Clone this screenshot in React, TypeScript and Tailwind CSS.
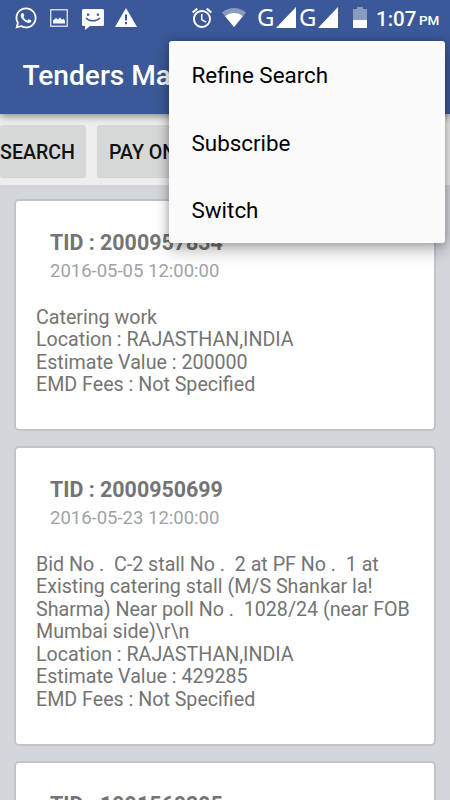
/**
 * App.tsx
 * --------------------------------------------------
 * Tender list screen with the overflow menu open.
 */
import { FaWhatsapp } from 'react-icons/fa';
import { MdAlarm } from 'react-icons/md';

const menuItems = ['Refine Search', 'Subscribe', 'Switch'];

const tenders = [
  {
    id: '2000957834',
    date: '2016-05-05 12:00:00',
    lines: ['Catering work'],
    value: '200000',
    height: 'h-[232px]',
  },
  {
    id: '2000950699',
    date: '2016-05-23 12:00:00',
    lines: [
      'Bid No .  C-2 stall No .  2 at PF No .  1 at',
      'Existing catering stall (M/S Shankar la!',
      'Sharma) Near poll No .  1028/24 (near FOB',
      'Mumbai side)\\r\\n',
    ],
    value: '429285',
    height: 'h-[300px]',
  },
  {
    id: '1991560295',
    height: 'h-[232px]',
  },
];

function SignalIcon() {
  return (
    <svg className="mb-px w-5 h-[21px]" viewBox="0 0 20 21" fill="currentColor">
      <path d="M20 0v21H0z" />
    </svg>
  );
}

function StatusBar() {
  return (
    <div className="flex h-[35px] items-center text-white">
      <FaWhatsapp className="ml-[14px] size-6" />
      <svg className="ml-3 size-[18px]" viewBox="0 0 18 18" fill="none">
        <rect x="0.75" y="0.75" width="16.5" height="16.5" stroke="currentColor" strokeWidth="1.3" opacity="0.85" />
        <path d="M3 14.5v-3l3-2.5 2 1.5 2-2 2.2 2.2 1.3-.9 1.5 1.7v3z" fill="currentColor" />
      </svg>
      <svg className="ml-[14px] mt-1 w-[22px] h-[21px]" viewBox="0 0 22 21" fill="none">
        <path d="M1.5 0h19A1.5 1.5 0 0 1 22 1.5v14a1.5 1.5 0 0 1-1.5 1.5H8l-5 4v-4H1.5A1.5 1.5 0 0 1 0 15.5v-14A1.5 1.5 0 0 1 1.5 0z" fill="currentColor" />
        <path d="M4 9c3.5 3.8 10.5 3.8 14 0" stroke="#3b5998" strokeWidth="1.5" />
        <path d="M5 4.5h2.200v2.200H5zM14.800 4.500H17v2.200h-2.200z" fill="#3b5998" />
      </svg>
      <svg className="ml-[11px] w-[22px] h-[19px]" viewBox="0 0 22 19">
        <path d="M11 0l11 19H0z" fill="currentColor" />
        <path d="M10 6.5h2v6h-2zM10 14h2v2.2h-2z" fill="#3b5998" />
      </svg>
      <MdAlarm className="ml-[53px] size-6" />
      <svg className="ml-2 w-6 h-[19px]" viewBox="0 0 24 19" fill="currentColor">
        <path d="M0 4.5C7-1.5 17-1.5 24 4.5L12 19z" opacity="0.4" />
        <path d="M3.2 8.3c5-4.4 12.6-4.4 17.6 0L12 19z" />
      </svg>
      <span className="ml-[11px] mb-px w-[19px] font-['Noto_Sans',sans-serif] text-[24px] leading-none">G</span>
      <SignalIcon />
      <span className="ml-[3px] mb-px w-[19px] font-['Noto_Sans',sans-serif] text-[24px] leading-none">G</span>
      <SignalIcon />
      <svg className="ml-[15px] mb-px w-[14px] h-[21px]" viewBox="0 0 14 21" fill="currentColor">
        <path d="M0 2h4V0h6v2h4v11H0z" opacity="0.4" />
        <path d="M0 13h14v8H0z" />
      </svg>
      <span className="ml-[9px] mt-[3px] w-[43px] text-[20.5px] font-medium leading-none">1:07</span>
      <span className="mt-[6px] text-[13.5px] font-medium leading-none">PM</span>
    </div>
  );
}

function OverflowMenu() {
  return (
    <div className="absolute left-[169px] top-[41px] h-[202px] w-[276px] rounded-[3px] bg-[#fafafa] shadow-[0_8px_16px_rgba(0,0,0,0.26),0_0_8px_rgba(0,0,0,0.24)]">
      {menuItems.map((item) => (
        <div key={item} className="flex h-[67.5px] items-center pl-[22.5px] pt-[3px] text-[22.4px] text-black">
          {item}
        </div>
      ))}
    </div>
  );
}

function TenderCard({ tender }: { tender: (typeof tenders)[number] }) {
  return (
    <div className={`${tender.height} shrink-0 rounded-[5px] border-2 border-[#c2c4ca] bg-white pl-5 pt-[28px] text-[#747474]`}>
      <h2 className="pl-[14px] text-[21.4px] font-bold leading-[27px]">TID : {tender.id}</h2>
      {tender.lines && (
        <>
          <p className="pl-[14px] pt-[3px] text-[18.5px] leading-6 text-[#a0a2a6]">{tender.date}</p>
          <div className="whitespace-pre pt-[23.5px] text-[19.65px] leading-[22.5px]">
            {tender.lines.map((line) => (
              <p key={line}>{line}</p>
            ))}
            <p>Location : RAJASTHAN,INDIA</p>
            <p>Estimate Value : {tender.value}</p>
            <p>EMD Fees : Not Specified</p>
          </div>
        </>
      )}
    </div>
  );
}

export default function App() {
  return (
    <div className="relative flex h-[800px] w-[450px] flex-col overflow-hidden bg-[#d3d6db] font-[Roboto,sans-serif]">
      <header className="relative h-[114px] shrink-0 bg-[#3b5998] shadow-[0_2px_8px_rgba(0,0,0,0.45)]">
        <StatusBar />
        <h1 className="flex h-[79px] items-center pl-[22.5px] pt-[3px] text-[28.1px] font-medium text-white whitespace-nowrap">
          Tenders Ma
        </h1>
      </header>

      <div className="flex h-[71px] shrink-0 gap-[11px] bg-[#eeeeee] pt-[11px] text-[19.6px] font-medium text-[#111111]">
        <button className="h-[52px] w-[86px] rounded-[3px] bg-[#d6d7d7] pr-[11px] pt-[3px] text-right shadow-[0_1px_1px_rgba(0,0,0,0.12)]">SEARCH</button>
        <button className="h-[52px] w-[347px] rounded-[3px] bg-[#d6d7d7] pl-[12px] pt-[3px] text-left shadow-[0_1px_1px_rgba(0,0,0,0.12)]">PAY ON</button>
      </div>

      <main className="flex flex-col gap-[15px] px-[14px] pt-[14px]">
        {tenders.map((tender) => (
          <TenderCard key={tender.id} tender={tender} />
        ))}
      </main>

      <OverflowMenu />
    </div>
  );
}
